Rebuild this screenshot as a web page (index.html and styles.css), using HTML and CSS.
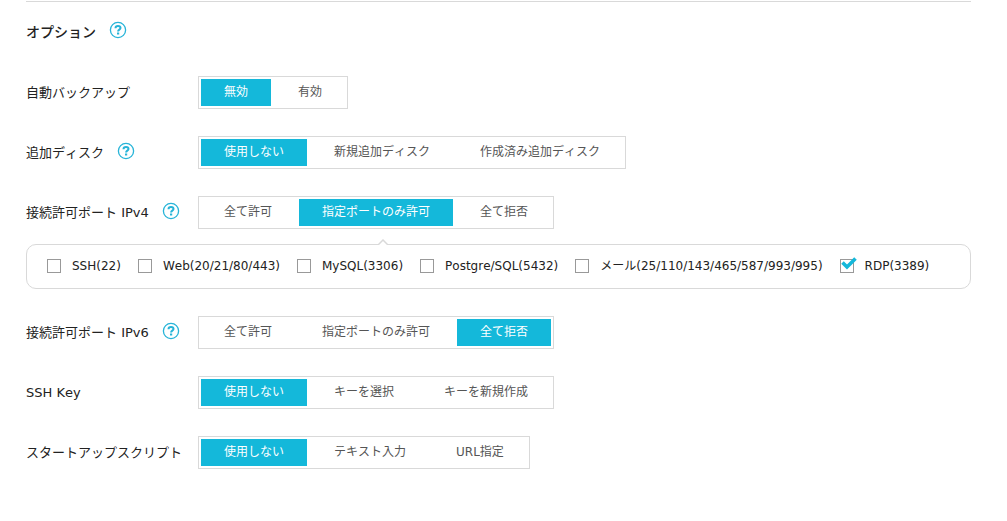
FILE: index.html
```html
<!DOCTYPE html>
<html lang="ja">
<head>
<meta charset="utf-8">
<title>オプション</title>
<link rel="stylesheet" href="styles.css">
</head>
<body>
<svg class="sprite" aria-hidden="true">
  <symbol id="help" viewBox="0 0 18 18">
    <circle cx="9" cy="9" r="7.6" fill="none" stroke="currentColor" stroke-width="1.3"/>
    <path d="M6.5 7.200C6.500 5.600 7.600 5 9 5c1.500 0 2.500.8 2.500 2 0 1.600-2.400 1.700-2.400 3.400" fill="none" stroke="currentColor" stroke-width="2"/>
    <path d="M8 11.500h2.200v2H8z" fill="currentColor"/>
  </symbol>
</svg>
<main class="options">
  <header class="options-header">
    <h2 class="title">オプション</h2>
    <button type="button" class="help" aria-label="オプションのヘルプ"><svg class="help-icon"><use href="#help"/></svg></button>
  </header>

  <div class="row">
    <div class="name"><span id="backup">自動バックアップ</span></div>
    <div class="segments" role="group" aria-labelledby="backup">
      <button type="button" class="segment selected" aria-pressed="true">無効</button>
      <button type="button" class="segment">有効</button>
    </div>
  </div>

  <div class="row">
    <div class="name"><span id="disk">追加ディスク</span><button type="button" class="help" aria-label="追加ディスクのヘルプ"><svg class="help-icon"><use href="#help"/></svg></button></div>
    <div class="segments" role="group" aria-labelledby="disk">
      <button type="button" class="segment selected" aria-pressed="true">使用しない</button>
      <button type="button" class="segment">新規追加ディスク</button>
      <button type="button" class="segment">作成済み追加ディスク</button>
    </div>
  </div>

  <div class="row">
    <div class="name"><span id="ipv4">接続許可ポート IPv4</span><button type="button" class="help" aria-label="IPv4のヘルプ"><svg class="help-icon"><use href="#help"/></svg></button></div>
    <div class="segments" role="group" aria-labelledby="ipv4">
      <button type="button" class="segment">全て許可</button>
      <button type="button" class="segment selected has-panel" aria-pressed="true">指定ポートのみ許可<svg class="pointer" viewBox="0 0 10 6" aria-hidden="true"><path d="M0 6 5 1l5 5" fill="#fff" stroke="#d9d9d9" stroke-width="1.500"/></svg></button>
      <button type="button" class="segment">全て拒否</button>
    </div>
  </div>

  <div class="ports">
    <label class="port"><input type="checkbox" class="check">SSH(22)</label>
    <label class="port"><input type="checkbox" class="check">Web(20/21/80/443)</label>
    <label class="port"><input type="checkbox" class="check">MySQL(3306)</label>
    <label class="port"><input type="checkbox" class="check">Postgre/SQL(5432)</label>
    <label class="port"><input type="checkbox" class="check">メール(25/110/143/465/587/993/995)</label>
    <label class="port checked"><input type="checkbox" class="check" checked><svg class="tick" viewBox="0 0 16 13" aria-hidden="true"><path d="M1.500 5.500 6 10 14.500 1.500" fill="none" stroke="#14b8da" stroke-width="3.600"/></svg>RDP(3389)</label>
  </div>

  <div class="row">
    <div class="name"><span id="ipv6">接続許可ポート IPv6</span><button type="button" class="help" aria-label="IPv6のヘルプ"><svg class="help-icon"><use href="#help"/></svg></button></div>
    <div class="segments" role="group" aria-labelledby="ipv6">
      <button type="button" class="segment">全て許可</button>
      <button type="button" class="segment">指定ポートのみ許可</button>
      <button type="button" class="segment selected" aria-pressed="true">全て拒否</button>
    </div>
  </div>

  <div class="row">
    <div class="name"><span id="ssh">SSH Key</span></div>
    <div class="segments" role="group" aria-labelledby="ssh">
      <button type="button" class="segment selected" aria-pressed="true">使用しない</button>
      <button type="button" class="segment">キーを選択</button>
      <button type="button" class="segment">キーを新規作成</button>
    </div>
  </div>

  <div class="row">
    <div class="name"><span id="script">スタートアップスクリプト</span></div>
    <div class="segments" role="group" aria-labelledby="script">
      <button type="button" class="segment selected" aria-pressed="true">使用しない</button>
      <button type="button" class="segment">テキスト入力</button>
      <button type="button" class="segment">URL指定</button>
    </div>
  </div>
</main>
</body>
</html>
```

FILE: styles.css
```css
* {
  box-sizing: border-box;
}

body {
  margin: 0;
  background: #fff;
  color: #222;
  font: 13px/20px "DejaVu Sans", "Noto Sans CJK JP", sans-serif;
  font-kerning: none;
}

.sprite {
  display: none;
}

.options {
  margin: 1px 36px 0 26px;
  border-top: 1px solid #d9d9d9;
}

.options-header {
  display: flex;
  align-items: center;
  gap: 13px;
  padding: 19px 0 17px;
  margin-bottom: 16px;
}

.title {
  margin: 0;
  font-size: 14px;
  line-height: 20px;
  font-weight: 500;
}

.row {
  display: flex;
  align-items: center;
  margin-bottom: 27px;
}

.name {
  display: flex;
  align-items: center;
  flex: 0 0 172px;
  gap: 13px;
  white-space: nowrap;
}

.help {
  display: flex;
  padding: 0 0 4px;
  border: 0;
  background: none;
  color: #27b4d8;
}

.help-icon {
  width: 18px;
  height: 18px;
}

.segments {
  display: flex;
  gap: 4px;
  padding: 2px;
  border: 1px solid #d9d9d9;
}

.segment {
  height: 27px;
  padding: 0 23px 2px;
  border: 0;
  background: none;
  color: #555;
  font: inherit;
  font-size: 12px;
  font-kerning: none;
  white-space: nowrap;
}

.selected {
  background: #14b8da;
  color: #fff;
}

.has-panel {
  position: relative;
}

.pointer {
  position: absolute;
  top: 40px;
  left: calc(50% + 2px);
  z-index: 1;
  width: 10px;
  height: 6px;
}

.ports {
  display: flex;
  flex-wrap: wrap;
  gap: 8px 17px;
  margin: -12px 0 27px;
  padding: 11px 20px 12px;
  border: 1px solid #d9d9d9;
  border-radius: 10px;
  font-size: 12px;
}

.port {
  display: flex;
  align-items: center;
  gap: 11px;
  white-space: nowrap;
}

.check {
  appearance: none;
  width: 14px;
  height: 14px;
  margin: 0;
  border: 1px solid #999;
  background: #fff;
}

.checked {
  position: relative;
}

.tick {
  position: absolute;
  top: 1px;
  left: 1px;
  width: 16px;
  height: 13px;
}
```
